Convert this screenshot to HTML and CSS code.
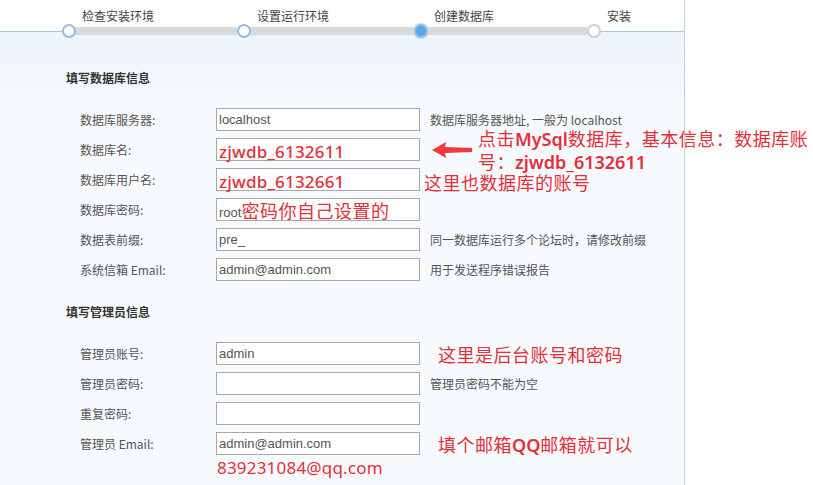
FILE: index.html
```html
<!DOCTYPE html>
<html lang="zh-CN">
<head>
    <meta charset="UTF-8">
    <title>安装 - 创建数据库</title>
    <link rel="stylesheet" href="styles.css">
</head>
<body>

<div class="panel">
    <div class="steps">
        <div class="step done">
            <span class="step-name">检查安装环境</span>
            <div class="track"><i class="dot"></i><b class="bar"></b></div>
        </div>
        <div class="step done">
            <span class="step-name">设置运行环境</span>
            <div class="track"><i class="dot"></i><b class="bar"></b></div>
        </div>
        <div class="step current">
            <span class="step-name">创建数据库</span>
            <div class="track"><i class="dot"></i><b class="bar"></b></div>
        </div>
        <div class="step todo">
            <span class="step-name">安装</span>
            <div class="track"><i class="dot"></i></div>
        </div>
    </div>

    <div class="form">
        <h3 class="title">填写数据库信息</h3>
        <div class="rows">
            <div class="row">
                <label>数据库服务器:</label>
                <div class="field">localhost</div>
                <span class="hint">数据库服务器地址, 一般为 localhost</span>
            </div>
            <div class="row">
                <label>数据库名:</label>
                <div class="field"><span class="mark code">zjwdb_6132611</span></div>
                <svg class="arrow" width="44" height="20" viewBox="0 0 44 20">
                    <path d="M2 10 L16 2 L15 7 L42 8 L42 12 L15 13 L16 18 Z" fill="#ee3a3a"/>
                </svg>
                <div class="note note-db">点击<b>MySql</b>数据库，基本信息：数据库账<br>号：<b>zjwdb_6132611</b></div>
            </div>
            <div class="row">
                <label>数据库用户名:</label>
                <div class="field"><span class="mark code">zjwdb_6132661</span></div>
                <span class="note inline shift">这里也数据库的账号</span>
            </div>
            <div class="row">
                <label>数据库密码:</label>
                <div class="field">root<span class="mark">密码你自己设置的</span></div>
            </div>
            <div class="row">
                <label>数据表前缀:</label>
                <div class="field">pre_</div>
                <span class="hint">同一数据库运行多个论坛时，请修改前缀</span>
            </div>
            <div class="row">
                <label>系统信箱 Email:</label>
                <div class="field">admin@admin.com</div>
                <span class="hint">用于发送程序错误报告</span>
            </div>
        </div>

        <h3 class="title">填写管理员信息</h3>
        <div class="rows">
            <div class="row">
                <label>管理员账号:</label>
                <div class="field">admin</div>
                <span class="note inline">这里是后台账号和密码</span>
            </div>
            <div class="row">
                <label>管理员密码:</label>
                <div class="field"></div>
                <span class="hint">管理员密码不能为空</span>
            </div>
            <div class="row">
                <label>重复密码:</label>
                <div class="field"></div>
            </div>
            <div class="row">
                <label>管理员 Email:</label>
                <div class="field">admin@admin.com</div>
                <span class="note inline">填个邮箱<b>QQ</b>邮箱就可以</span>
            </div>
            <div class="row extra">
                <label></label>
                <span class="mark code qq">839231084@qq.com</span>
            </div>
        </div>
    </div>
</div>

</body>
</html>
```

FILE: styles.css
```css
body {
    margin: 0;
    background: #fff;
    font-family: "Liberation Sans", "Noto Sans CJK SC", sans-serif;
    font-size: 12px;
    color: #555;
    overflow: hidden;
}

.panel {
    width: 684px;
    height: 485px;
    border-right: 1px solid #c9d2da;
}

/* 步骤条 */
.steps {
    display: flex;
    padding-left: 62px;
    height: 31px;
    border-bottom: 1px solid #a9c7df;
    background: #fff;
}

.step {
    width: 175px;
    flex: none;
    display: flex;
    flex-direction: column;
    justify-content: flex-end;
}

.step:nth-child(2) {
    width: 177px;
}

.step:nth-child(3) {
    width: 173px;
}

.step.todo {
    width: 60px;
}

.step-name {
    padding-left: 20px;
    line-height: 16px;
    color: #444;
    font-family: "Noto Sans CJK SC", sans-serif;
}

.track {
    display: flex;
    align-items: center;
    height: 14px;
    margin-bottom: -7px;
    position: relative;
    z-index: 1;
}

.dot {
    width: 10px;
    height: 10px;
    border: 2px solid #8fbde3;
    border-radius: 50%;
    background: #fff;
    flex: none;
    position: relative;
    z-index: 2;
}

.current .dot {
    background: #5ea6e2;
    box-shadow: 0 0 0 1px #c6e0f5;
}

.todo .dot {
    border-color: #cfcfcf;
}

.bar {
    flex: 1;
    height: 8px;
    margin-left: -2px;
    background: #d9d9d9;
}

/* 表单 */
.form {
    padding: 38px 0 0 66px;
    height: 415px;
    background: linear-gradient(#edf4fb, #f6f9fd 70px, #f7fafd);
}

.title {
    margin: 0 0 22px;
    font-size: 12px;
    font-weight: bold;
    color: #333;
    font-family: "Noto Sans CJK SC", sans-serif;
    line-height: 16px;
}

.rows {
    padding-left: 14px;
    margin-bottom: 23px;
}

.row {
    display: flex;
    align-items: center;
    height: 23px;
    margin-bottom: 7px;
    position: relative;
}

.row.extra {
    height: 14px;
    margin-top: -2px;
}

.row label {
    width: 136px;
    flex: none;
    font-family: "Noto Sans CJK SC", sans-serif;
    color: #555;
}

.field {
    width: 200px;
    height: 21px;
    flex: none;
    border: 1px solid #a8a8a8;
    background: #fff;
    padding-left: 2px;
    font-size: 13px;
    line-height: 21px;
    color: #555;
    white-space: nowrap;
}

.hint {
    margin-left: 10px;
    color: #555;
    font-family: "Noto Sans CJK SC", sans-serif;
    white-space: nowrap;
}

.mark {
    color: #e3303a;
    font-family: "Noto Sans CJK SC", sans-serif;
    font-size: 18px;
    letter-spacing: 0.5px;
    position: relative;
    top: 1px;
}

.mark.code {
    font-family: "Noto Sans", sans-serif;
    font-size: 17px;
    font-weight: 500;
    letter-spacing: 0.2px;
    top: 2px;
}

.mark.qq {
    font-weight: 400;
    top: 0;
    padding-left: 1px;
}

.note {
    color: #e3303a;
    font-family: "Noto Sans CJK SC", sans-serif;
    font-size: 18px;
    letter-spacing: 0.5px;
    white-space: nowrap;
}

.note b {
    font-family: "Noto Sans", "Noto Sans CJK SC", sans-serif;
    font-weight: 600;
    letter-spacing: 0;
}

.note.inline {
    margin-left: 18px;
}

.note.shift {
    margin-left: 4px;
    position: relative;
    top: 2px;
}

.arrow {
    margin-left: 10px;
    flex: none;
}

.note-db {
    position: absolute;
    left: 398px;
    top: -11px;
    line-height: 22px;
}
```
